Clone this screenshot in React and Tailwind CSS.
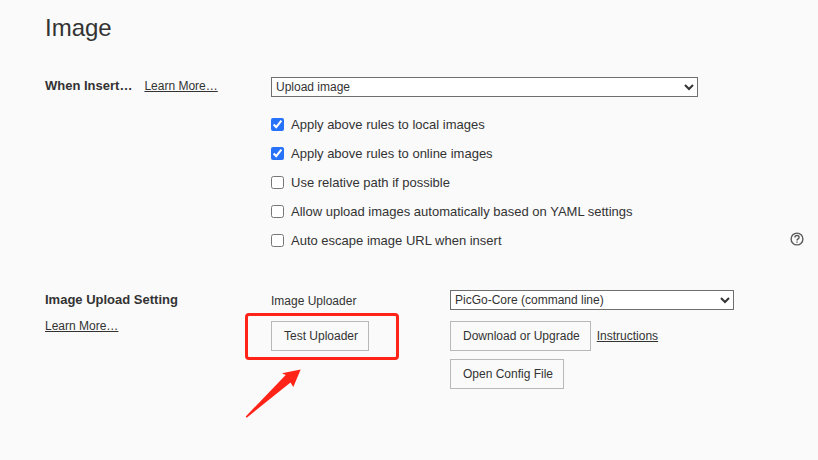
import { useState } from "react";

const rules = [
  { id: "local", label: "Apply above rules to local images", on: true },
  { id: "online", label: "Apply above rules to online images", on: true },
  { id: "relative", label: "Use relative path if possible", on: false },
  { id: "yaml", label: "Allow upload images automatically based on YAML settings", on: false },
  { id: "escape", label: "Auto escape image URL when insert", on: false, help: true },
];

function HelpIcon() {
  return (
    <svg width="14" height="14" viewBox="0 0 14 14" fill="none" stroke="#5a5a5a" strokeWidth="1.4">
      <circle cx="7" cy="7" r="5.9" />
      <path d="M4.900 5.600C4.900 4.300 5.800 3.500 7 3.500s2.100.8 2.100 1.900C9.100 6.800 7 6.900 7 8.500" />
      <path d="M7 9.400v1.400" />
    </svg>
  );
}

function Rule({ rule }) {
  const [checked, setChecked] = useState(rule.on);
  return (
    <li className="flex h-[29px] items-center justify-between">
      <label className="flex items-center gap-[7px]">
        <input
          type="checkbox"
          id={rule.id}
          checked={checked}
          onChange={() => setChecked(!checked)}
          className="h-[13px] w-[13px] accent-[#2672f8]"
        />
        {rule.label}
      </label>
      {rule.help && (
        <button type="button" aria-label="Help" className="pb-1">
          <HelpIcon />
        </button>
      )}
    </li>
  );
}

function MoreLink({ children }) {
  return (
    <a href="#more" className="text-xs leading-4 underline">
      {children}
    </a>
  );
}

function PlainButton({ children }) {
  return (
    <button type="button" className="h-[30px] border border-[#b8b8b8] pr-2.5 pl-3 text-xs whitespace-nowrap">
      {children}
    </button>
  );
}

const selectStyle = "block h-5 border border-[#6f6f6f] bg-white text-xs";

export default function App() {
  return (
    <main className="min-h-screen bg-[#fafafa] pt-3 pr-3.5 pl-[45px] font-['Liberation_Sans',Arial,sans-serif] text-[13px] leading-4 text-[#333333]">
      <h1 className="text-2xl leading-8">Image</h1>

      <section className="mt-[33px] grid grid-cols-[226px_1fr]">
        <div className="flex items-start gap-3 pt-px">
          <h2 className="font-bold">When Insert…</h2>
          <MoreLink>Learn More…</MoreLink>
        </div>
        <div>
          <div className="pr-[106px]">
            <select aria-label="When insert" className={`${selectStyle} w-full`}>
              <option>Upload image</option>
            </select>
          </div>
          <ul className="mt-[13px]">
            {rules.map((rule) => (
              <Rule key={rule.id} rule={rule} />
            ))}
          </ul>
        </div>
      </section>

      <section className="mt-[35px] grid grid-cols-[226px_1fr]">
        <div>
          <h2 className="mt-0.5 mb-2.5 font-bold">Image Upload Setting</h2>
          <MoreLink>Learn More…</MoreLink>
        </div>
        <div className="grid grid-cols-[179px_1fr] items-start gap-y-[11px] pr-[70px]">
          <label htmlFor="uploader" className="pt-[3px] text-xs leading-4">
            Image Uploader
          </label>
          <select id="uploader" className={`${selectStyle} w-full`}>
            <option>PicGo-Core (command line)</option>
          </select>
          <div className="relative w-fit">
            <PlainButton>Test Uploader</PlainButton>
            <div className="pointer-events-none absolute -top-2 -right-[30px] -bottom-[9px] -left-[26px] rounded-[4px] border-3 border-[#ff2318]" />
            <svg
              className="pointer-events-none absolute top-12 -left-[26px]"
              width="56"
              height="50"
              viewBox="0 0 56 50"
              fill="#ff2318"
            >
              <path d="M55.700.6L37 4.300l3.700 1.700L.7 47.500l1 1.200L45.500 13.500l2.800 4.500z" />
            </svg>
          </div>
          <div className="flex flex-col items-start gap-2">
            <div className="flex items-center gap-1.5">
              <PlainButton>Download or Upgrade</PlainButton>
              <MoreLink>Instructions</MoreLink>
            </div>
            <PlainButton>Open Config File</PlainButton>
          </div>
        </div>
      </section>
    </main>
  );
}
